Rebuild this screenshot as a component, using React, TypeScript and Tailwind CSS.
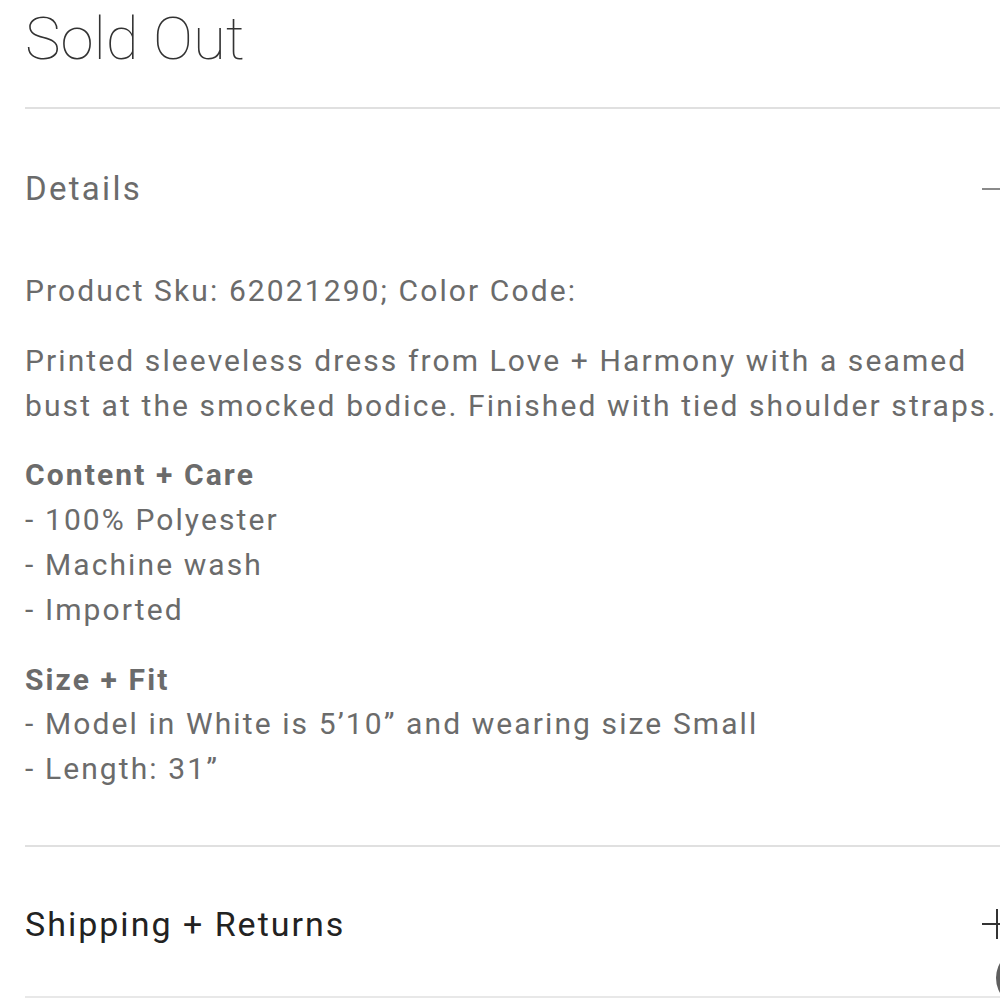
import React from "react";

export default function App() {
  return (
    <div className="relative w-[1000px] h-[998px] overflow-hidden bg-white" style={{ fontFamily: "Roboto, 'Noto Sans', sans-serif" }}>
      <div className="w-[1030px] pl-[25px]">
        <h1 className="pt-[3px] h-[107px] text-[60px] leading-[72px] font-thin text-[#333]">Sold Out</h1>
        <div className="border-t-2 border-[#e0e0e0]">
          <div className="flex items-center justify-between h-[160px] pr-[18px]">
            <span className="text-[33px] text-[#6b6b6b] tracking-[2.3px]">Details</span>
            <span className="block w-[30px] h-[2px] bg-[#8a8a8a]" />
          </div>
          <div className="text-[30px] leading-[44.8px] text-[#6b6b6b] tracking-[2.1px]">
            <p>Product Sku: 62021290; Color Code:</p>
            <p className="mt-[25px] whitespace-nowrap">Printed sleeveless dress from Love + Harmony with a seamed<br />bust at the smocked bodice. Finished with tied shoulder straps.</p>
            <p className="mt-[25px]"><span className="font-bold">Content + Care</span><br />- 100% Polyester<br />- Machine wash<br />- Imported</p>
            <p className="mt-[25px]"><span className="font-bold">Size + Fit</span><br />- Model in White is 5’10” and wearing size Small<br />- Length: 31”</p>
          </div>
        </div>
        <div className="mt-[53px] border-t-2 border-[#e0e0e0]">
          <div className="flex items-center justify-between h-[151px] pt-[6px] pr-[18px] border-b-2 border-[#e8e8e8]">
            <span className="text-[34px] text-[#222] tracking-[2px]">Shipping + Returns</span>
            <span className="relative block w-[30px] h-[30px]">
              <span className="absolute left-0 top-[14px] w-[30px] h-[2px] bg-[#333]" />
              <span className="absolute top-0 left-[14px] w-[2px] h-[30px] bg-[#333]" />
            </span>
          </div>
        </div>
      </div>
      <div className="absolute left-[996px] top-[948px] w-[60px] h-[60px] rounded-full bg-[#5f5f5f]" />
    </div>
  );
}
